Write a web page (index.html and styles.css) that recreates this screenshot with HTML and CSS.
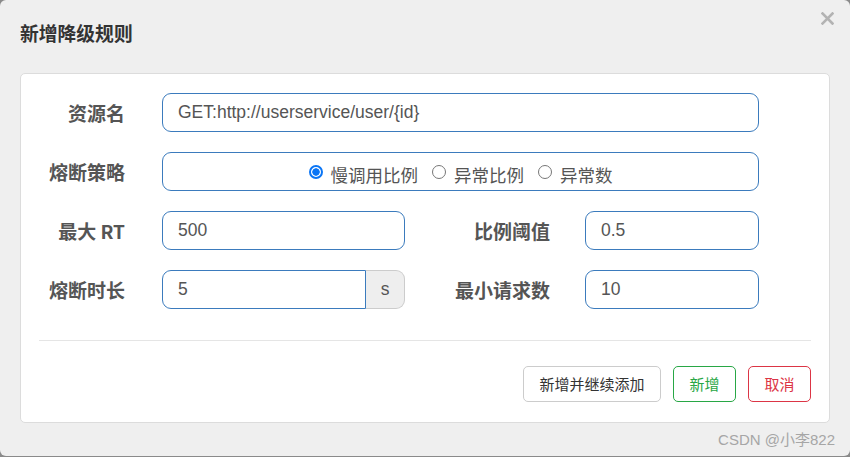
FILE: index.html
```html
<!DOCTYPE html>
<html lang="zh">
<head>
<meta charset="utf-8">
<title>新增降级规则</title>
<link rel="stylesheet" href="styles.css">
</head>
<body>
<div class="dialog">
  <div class="header">
    <h4 class="title">新增降级规则</h4>
    <span class="close" aria-label="close">
      <svg width="13" height="13" viewBox="0 0 13 13"><path d="M1.5 1.5 L11.5 11.5 M11.5 1.5 L1.5 11.5" stroke="#b3b3b3" stroke-width="2.6" stroke-linecap="square"/></svg>
    </span>
  </div>
  <div class="card">
    <form class="form">
      <label class="lbl l1">资源名</label>
      <div class="field full"><input class="inp" type="text" value="GET:http://userservice/user/{id}"></div>

      <label class="lbl l1">熔断策略</label>
      <div class="field full radios">
        <label class="radio"><input type="radio" name="st" checked><span>慢调用比例</span></label>
        <label class="radio"><input type="radio" name="st"><span>异常比例</span></label>
        <label class="radio"><input type="radio" name="st"><span>异常数</span></label>
      </div>

      <label class="lbl l1">最大 RT</label>
      <div class="field f1"><input class="inp" type="text" value="500"></div>
      <label class="lbl l2">比例阈值</label>
      <div class="field f2"><input class="inp" type="text" value="0.5"></div>

      <label class="lbl l1">熔断时长</label>
      <div class="field f1 group"><input class="inp inp-left" type="text" value="5"><span class="addon">s</span></div>
      <label class="lbl l2">最小请求数</label>
      <div class="field f2"><input class="inp" type="text" value="10"></div>
    </form>
    <div class="divider"></div>
    <div class="footer">
      <button class="btn btn-default" type="button">新增并继续添加</button>
      <button class="btn btn-green" type="button">新增</button>
      <button class="btn btn-red" type="button">取消</button>
    </div>
  </div>
  <div class="watermark">CSDN @小李822</div>
</div>
</body>
</html>
```

FILE: styles.css
```css
html, body {
  margin: 0;
  padding: 0;
}
body {
  background: #8a8a8a;
  width: 850px;
  height: 457px;
  overflow: hidden;
  font-family: "Liberation Sans", "Noto Sans CJK SC", sans-serif;
}
.dialog {
  position: relative;
  width: 850px;
  height: 456px;
  background: #efefef;
  border-radius: 6px;
  box-sizing: border-box;
}
.header {
  padding: 20px 20px 0;
  height: 73px;
  box-sizing: border-box;
}
.title {
  margin: 0;
  font-family: "Noto Sans CJK SC", sans-serif;
  font-size: 18.8px;
  line-height: 26px;
  font-weight: 700;
  color: #333;
}
.close {
  position: absolute;
  top: 12px;
  right: 16px;
  width: 13px;
  height: 13px;
  display: block;
}
.close svg { display: block; }
.card {
  margin: 0 20px;
  background: #fff;
  border: 1px solid #dcdcdc;
  border-radius: 5px;
  padding: 19px 18px 19px 0;
  height: 350px;
  box-sizing: border-box;
}
.form {
  display: grid;
  grid-template-columns: 19px 85px 37px 243px 145px 35px 174px;
  grid-auto-rows: 39px;
  row-gap: 20px;
  margin: 0;
}
.lbl {
  display: flex;
  align-items: center;
  justify-content: flex-end;
  font-family: "Noto Sans CJK SC", sans-serif;
  font-weight: 700;
  font-size: 19px;
  color: #555;
  white-space: nowrap;
}
.l1 { grid-column: 2 / 3; }
.l2 { grid-column: 5 / 6; }
.field { display: flex; }
.full { grid-column: 4 / 8; }
.f1 { grid-column: 4 / 5; }
.f2 { grid-column: 7 / 8; }
.inp {
  width: 100%;
  height: 39px;
  box-sizing: border-box;
  border: 1px solid #3b7bbd;
  border-radius: 9px;
  padding: 0 15px;
  font-family: "Liberation Sans", "Noto Sans CJK SC", sans-serif;
  font-size: 17.5px;
  color: #555;
  background: #fff;
  outline: none;
  margin: 0;
}
.radios {
  border: 1px solid #3b7bbd;
  border-radius: 9px;
  box-sizing: border-box;
  justify-content: center;
  align-items: center;
  gap: 14px;
  padding-top: 5px;
}
.radio {
  display: flex;
  align-items: center;
  font-family: "Noto Sans CJK SC", sans-serif;
  font-size: 17.5px;
  color: #555;
}
.radio input {
  -webkit-appearance: none;
  appearance: none;
  margin: 0 8px 4px 0;
  width: 14px;
  height: 14px;
  box-sizing: border-box;
  border: 1.5px solid #777;
  border-radius: 50%;
  background: #fff;
}
.radio input:checked {
  border: 2px solid #0a75f5;
  background: radial-gradient(circle, #0a75f5 0, #0a75f5 3.4px, #fff 4px);
}
.group .inp-left {
  border-top-right-radius: 0;
  border-bottom-right-radius: 0;
}
.addon {
  flex: 0 0 39px;
  box-sizing: border-box;
  height: 39px;
  display: flex;
  align-items: center;
  justify-content: center;
  background: #eee;
  border: 1px solid #ccc;
  border-left: 0;
  border-radius: 0 9px 9px 0;
  font-size: 17.5px;
  color: #555;
}
.divider {
  margin: 31px 0 0 18px;
  height: 1px;
  background: #e5e5e5;
}
.footer {
  display: flex;
  justify-content: flex-end;
  gap: 12px;
  margin-top: 25px;
}
.btn {
  height: 36px;
  box-sizing: border-box;
  padding: 0 15.5px;
  border-radius: 5px;
  background: #fff;
  font-family: "Noto Sans CJK SC", sans-serif;
  font-size: 15px;
  line-height: 34px;
  cursor: pointer;
}
.btn-default { border: 1px solid #ccc; color: #333; }
.btn-green { border: 1px solid #28a745; color: #28a745; }
.btn-red { border: 1px solid #dc3545; color: #dc3545; }
.watermark {
  position: absolute;
  right: 15px;
  top: 430px;
  font-family: "Liberation Sans", "Noto Sans CJK SC", sans-serif;
  font-size: 15px;
  color: #a6a6a6;
  line-height: 20px;
}
```
